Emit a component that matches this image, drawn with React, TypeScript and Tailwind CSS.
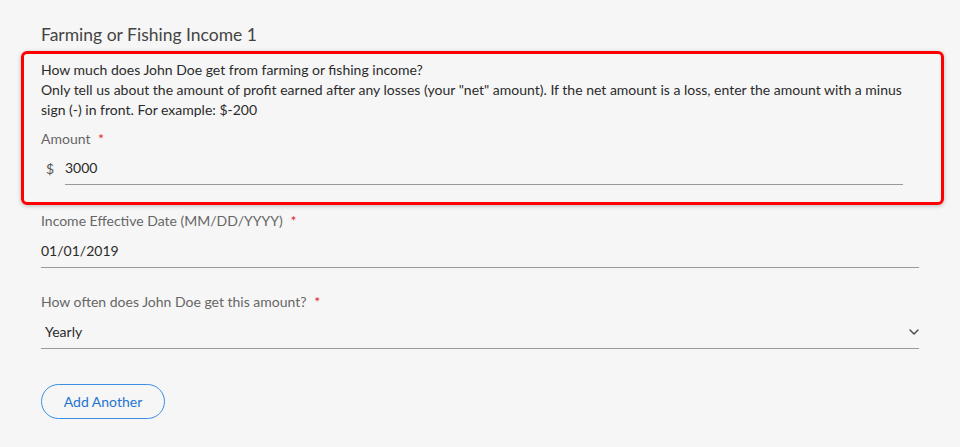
import { ChevronDown } from "lucide-react";

function Label({ text }: { text: string }) {
  return (
    <div className="text-[14px] leading-5 text-[#666]">
      {text} <span className="ml-1 text-[#e0262b]">*</span>
    </div>
  );
}

export default function App() {
  return (
    <div className="min-h-[447px] bg-[#f6f6f6] font-['Lato','Open_Sans',sans-serif] text-[#2b2b2b]">
      <div className="pl-[41px] pr-[41px] pt-[24px]">
        <h2 className="text-[17.5px] leading-[22px] text-[#444]">Farming or Fishing Income 1</h2>
      </div>

      <div className="ml-[21px] mr-[16px] mt-[5px] rounded-[6px] border-[3px] border-[#ff0000] px-[17px] pb-[17px] pt-[6px] shadow-[0_1px_4px_rgba(0,0,0,0.25)]">
        <div className="pr-[16px] text-[14px] leading-5">
          <p>How much does John Doe get from farming or fishing income?</p>
          <p>
            Only tell us about the amount of profit earned after any losses (your "net" amount). If the net amount
            is a loss, enter the amount with a minus sign (-) in front. For example: $-200
          </p>
        </div>
        <div className="mt-[9px]">
          <Label text="Amount" />
        </div>
        <div className="mt-[9px] flex items-end pr-[21px]">
          <span className="w-[24px] pb-[6px] pl-[5px] text-[14px] leading-5 text-[#555]">$</span>
          <div className="flex-1 border-b border-[#999] pb-[6px] text-[14px] leading-5">3000</div>
        </div>
      </div>

      <div className="px-[41px]">
        <div className="mt-[6px]">
          <Label text="Income Effective Date (MM/DD/YYYY)" />
        </div>
        <div className="mt-[10px] border-b border-[#999] pb-[6px] text-[14px] leading-5">01/01/2019</div>

        <div className="mt-[24px]">
          <Label text="How often does John Doe get this amount?" />
        </div>
        <div className="mt-[10px] flex items-center justify-between border-b border-[#999] pb-[6px] pl-[4px] text-[14px] leading-5">
          <span>Yearly</span>
          <ChevronDown className="-mr-[3px] h-4 w-4 text-[#444]" strokeWidth={2} />
        </div>

        <button className="mt-[35px] h-[35px] w-[124px] rounded-full border border-[#3a8ee6] text-[14px] text-[#1f74d0]">
          Add Another
        </button>
      </div>
    </div>
  );
}
